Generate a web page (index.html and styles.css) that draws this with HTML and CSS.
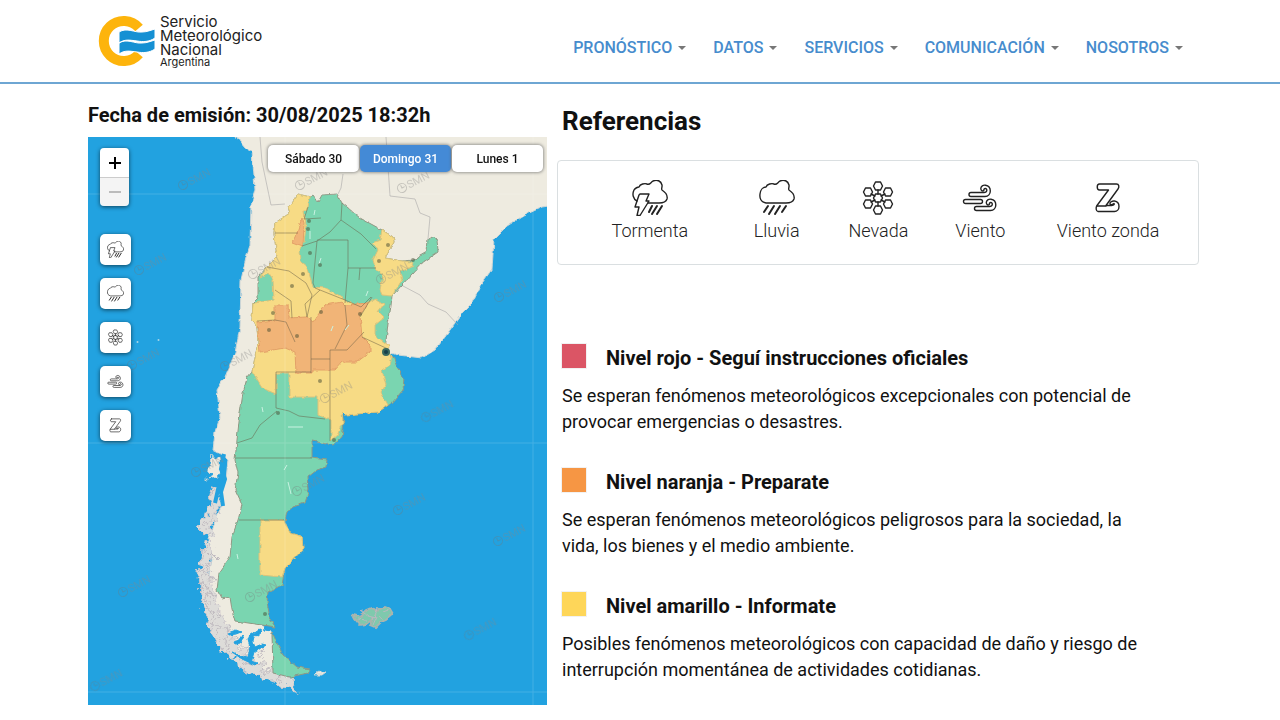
FILE: index.html
```html
<!DOCTYPE html>
<html lang="es">
<head>
<meta charset="utf-8">
<meta name="viewport" content="width=device-width, initial-scale=1">
<title>Alertas - Servicio Meteorológico Nacional</title>
<link rel="stylesheet" href="styles.css">
</head>
<body>
<svg class="sprite" aria-hidden="true">
  <symbol id="tormenta" viewBox="0 0 36 36">
    <path d="M5 21C1 19 0 14 2 10 3 8 6 7 7 7 8 4 13 3 15 4 18 5 18 3 21 1c4-2 8 0 9 4 .4 2-1 4 0 5 3 2 6 5 5 9-1 3-4 4-8 4H16"/>
    <path d="M8 14h9l-3 7h3L8 35.500H5L7 27H3l4-12z"/>
    <path class="thick" d="M20 26l-3 6M25 26l-5 8M30 26l-5 8"/>
  </symbol>
  <symbol id="lluvia" viewBox="0 0 36 36">
    <path d="M7 23C2 22 .5 18 1 14 1.500 10 4 7 7 7 8 4 13 3 15 4 18 5 18 3 21 1c4-2 8 0 9 4 .4 2-1 4 0 5 3 2 6 5 5 9-1 3-4 4-8 4z"/>
    <path class="thick" d="M9 26l-4 6M15 26l-5 8M21 26l-5 8M27 26l-4 6"/>
  </symbol>
  <symbol id="nevada" viewBox="0 0 36 36">
    <path d="M18 10v4M18 22v4M11 14l4 2M21 20l4 2M25 14l-4 2M15 20l-4 2"/>
    <path d="M15.500 2h5l2 4-2 4h-5l-2-4zM15.500 14h5l2 4-2 4h-5l-2-4zM15.500 26h5l2 4-2 4h-5l-2-4zM5.500 8h5l2 4-2 4h-5l-2-4zM25.500 8h5l2 4-2 4h-5l-2-4zM5.500 20h5l2 4-2 4h-5l-2-4zM25.500 20h5l2 4-2 4h-5l-2-4z"/>
  </symbol>
  <symbol id="viento" viewBox="0 0 36 36">
    <path d="M9 16.500a2 2 0 0 1 0-4h13c3.500 0 3.500-4 1.300-4-1.500 0-1.500 1-1.500 2-1.500 1-3 0-3-2 0-5 9.500-4.500 9.500 2.500 0 3-2 5.500-5.300 5.500z"/>
    <path d="M3.500 23.500a2 2 0 0 1 0-4h15a2 2 0 0 1 0 4z"/>
    <path d="M14.500 30.500a2 2 0 0 1 0-4h13c3.500 0 3.500-4 1.300-4-1.500 0-1.500 1-1.500 2-1.500 1-3 0-3-2 0-5 9.500-4.500 9.500 2.500 0 3-2 5.500-5.300 5.500z"/>
  </symbol>
  <symbol id="zonda" viewBox="0 0 36 36">
    <path d="M9.500 4h17c2.500 0 3 3 1.500 5L16 25.500h5.500c3 0 3-1.500 2.500-2-1 1-4 2-4 0 0-3.500 9-4 9 3 0 3-2 5-4.500 5H8c-2 0-2.500-4-1-6L18.500 10h-9c-3 0-3-6 0-6z"/>
    <path d="M7 26h9"/>
  </symbol>
  <symbol id="marca" viewBox="-6 -20 44 28">
    <g transform="rotate(-28)"><circle r="4.500"/><path d="M0-3V0H3"/><text x="6" y="4">SMN</text></g>
  </symbol>
</svg>

<header class="site-header">
  <a class="brand" href="#">
    <svg class="brand-mark" viewBox="0 0 58 54" aria-hidden="true">
      <path class="sun" d="M41 14A20 20 0 1 0 41 40" />
      <path class="wave" d="M21 18c8-5 16 1 23 0 5 0 9-2 13-3v9c-6 4-12 4-18 3-8-1-12-2-18 2zM21 29c8-5 16 1 23 0 5 0 9-2 13-3v9c-6 4-12 4-18 3-8-1-12-2-18 2z"/>
    </svg>
    <span class="brand-text"><span>Servicio</span><span>Meteorológico</span><span>Nacional</span><small>Argentina</small></span>
  </a>
  <nav class="menu" aria-label="Principal">
    <a href="#">PRONÓSTICO</a><a href="#">DATOS</a><a href="#">SERVICIOS</a><a href="#">COMUNICACIÓN</a><a href="#">NOSOTROS</a>
  </nav>
</header>

<main class="content">
  <section class="alerts">
    <h2 class="issued">Fecha de emisión: 30/08/2025 18:32h</h2>
    <div class="map">
      <svg class="map-art" viewBox="88 137 459 568" role="img" aria-label="Mapa de alertas de Argentina">
        <defs>
          <filter id="costa" x="-5%" y="-5%" width="110%" height="110%"><feTurbulence type="fractalNoise" baseFrequency=".16" numOctaves="2" seed="4"/><feDisplacementMap in="SourceGraphic" scale="4" xChannelSelector="R" yChannelSelector="G"/></filter>
          <filter id="islas" x="-10%" y="-10%" width="120%" height="120%"><feTurbulence type="fractalNoise" baseFrequency=".13" numOctaves="3" seed="8"/><feDisplacementMap in="SourceGraphic" scale="16" xChannelSelector="R" yChannelSelector="G"/></filter>
        </defs>
        <path class="sea" d="M88 137h459v568H88z"/>
        <g filter="url(#costa)">
          <path class="land" d="M232 130L240 142 245 148 252 152 254 175 255 190 251 205 250 245 246 258 241 280 240 327 235 353 225 377 217 390 220 417 215 433 213 450 223 455 228 460 226 480 219 495 222 505 213 525 208 540 212 560 207 585 213 610 221 630 235 650 260 676 280 683 295 679 273 672 272 632 260 625 250 560 270 460 300 400 380 350 398 355 422 358 435 350 445 337 462 313 472 303 480 286 492 269 494 239 507 226 523 216 542 207 555 205V130z"/>
        </g>
        <g filter="url(#islas)">
          <path class="land" d="M211 456h8l1 22-11 2z"/>
          <path class="isles" d="M212 486l8 3-1 18-6 15-2 14-10-4-4-4 9-12zM204 540l9 2-3 22 4 28 7 22 9 18 15 21 20 15 17 6 10 8 6 10-8-3-22-9-25-11-20-17-12-19-9-26-3-35z"/>
          <path class="scratches" d="M214 488l-5 14 5 12-8 12 6 7M208 543l-6 18 7 9-9 12 8 8-4 14 9 8-4 11 11 6-5 8 14 7-4 7 15 7 6-4 3 11 13-3 1 10 10-5 3 12 10-4M205 550l9 9-13 11 12 5-12 14 14 8-10 11 16 5-10 13 18 2-5 12 16-2 4 13 16-3 4 12"/>
        </g>
        <circle class="islet" cx="158.500" cy="340" r="1"/><circle class="islet" cx="137.500" cy="342" r="1"/>
        <path class="channels" d="M224 454l-3 15 4 10-4 13 2 14M219 485l-4 18"/>
        <g filter="url(#costa)">
          <path class="straits" d="M228 633l8-3 5 2-5 2-7 1zM234 642l5-2 3-5 2 3-4 5-5 1zM247 661l3-14-2-7 3-8 4 1-2 9 2 5 7-3 4 1-7 5-4 2-3 11zM253 634l6-4 3 1-6 5zM263 627l8-2 1 6-8-1zM232 652l14 6 11 5-2 2-13-6z"/>
        </g>
        <path class="countries" d="M260 137l2 25 9 43 14-1M343 174l-2 14-3 6M386 137l4 59 25 3 5 14 10 4-2 22M403 286l17 9 8 9 18 8 12 13"/>
        <g filter="url(#costa)">
          <path class="green edge" d="M298 194L310 197 313 195 318 202 322 195 337 194 342 203 360 218 382 230 393 237 394 242 385 258 402 261 413 260 427 252 428 240 432 237 437 239 438 252 422 263 402 285 392 296 390 313 388 323 385 350 393 357 397 367 404 378 403 390 392 403 378 412 345 415 342 412 344 423 342 437 332 445 312 441 312 458 327 460 326 467 317 470 308 477 309 490 305 503 293 507 287 512 284 525 290 533 303 537 304 548 285 568 282 585 268 592 267 602 270 618 275 627 235 621 232 610 230 597 222 599 217 590 219 573 230 557 232 537 238 520 242 505 235 490 238 473 235 460 237 440 240 413 243 393 247 378 252 372 258 343 257 327 252 320 253 303 258 298 258 277 267 267 277 257 274 233 275 223 290 213 288 207z"/>
          <path class="green edge" d="M272 632L277 643 283 655 297 667 310 669 308 673 290 677 273 673z"/>
          <path class="yellow" d="M298 194L310 197 308 207 304 212 306 225 304 243 300 250 301 262 308 268 313 287 325 288 345 300 358 305 368 303 376 299 384 304 378 312 384 318 375 325 375 335 388 345 392 357 390 365 382 370 386 385 381 392 388 405 378 412 345 415 342 412 343 423 338 435 331 441V421L318 414V397H289V373H276V394L262 388 252 372 258 343 257 327 252 320 253 303 274 300 273 280 268 273 260 277 267 267 277 257 274 233 275 223 290 213 288 207z"/>
          <path class="yellow" d="M382 230L393 237 394 242 385 258 402 261 412 262 414 266 400 272 402 280 392 296 382 295 380 290 383 275 376 270 373 260 378 250 372 243 380 240z"/>
          <path class="yellow" d="M260 520H284L290 533 303 537 304 548 285 568 282 577 260 575z"/>
          <path class="orange" d="M275 305H288L289 318 307 317 313 322 325 305 342 302 345 305 368 303 360 315 362 337 370 345V352L357 362H342L335 370H312V373H296L295 352 285 348 260 352 257 322 275 320zM302 217L304 223 303 247 292 243 297 233z"/>
        </g>
        <path class="borders" d="M275 233h23M308 207l-4 12 17-1M342 203l-1 17-11 12-13 9-15 5M317 241l-4 42 2 5 30 12M317 240h31v28M341 220l20 14 15 15M348 268h28M348 268l-3 35M267 267l22 4 17 12 6 12-5 22M275 290l16 11 1 17M307 317l-2-13 15-14M311 317v56M276 372h35M330 350v91M330 350h17l17-18M345 305l2 20-12 24M311 359h19M276 372v36l13 3 10 5 26 3M237 443l15-5 8-13 17-14M235 458h77M239 520h45M257 321l18-1 11 2 9 20M345 300l16 7 10-10M372 297l-12 20M362 337l26 12M360 268l-1 12"/>
        <path class="marks" d="M262 407l1 5M288 427h15M288 482l3 12M284 470l3-5M315 210l-1 5M321 258l-2 6M368 291l-2 5M333 326l-2 5M345 330l4-5M310 231v8M237 554l1 5"/>
        <g class="cities"><circle cx="309" cy="221" r="2"/><circle cx="308" cy="229" r="2"/><circle cx="310" cy="253" r="2"/><circle cx="320" cy="265" r="2"/><circle cx="292" cy="286" r="2"/><circle cx="303" cy="274" r="2"/><circle cx="379" cy="261" r="2"/><circle cx="388" cy="245" r="2"/><circle cx="273" cy="313" r="2"/><circle cx="269" cy="330" r="2"/><circle cx="297" cy="336" r="2"/><circle cx="321" cy="312" r="2"/><circle cx="360" cy="314" r="2"/><circle cx="320" cy="381" r="2"/><circle cx="278" cy="413" r="2"/><circle cx="413" cy="260" r="2"/><circle cx="265" cy="614" r="2"/><circle cx="334" cy="440" r="2"/></g>
        <circle class="capital" cx="386" cy="352" r="3"/>
        <g filter="url(#costa)">
          <path class="falklands" d="M353 615l8 2 3-6 7-3 6 2 8-3 5 2 3 5-7 6-5 2-6 6-5-2 3-7-7 5-6 1-5-6z"/>
          <path class="falklands-cuts" d="M360 610l8 6 8 2-3 7M378 608l-5 12M383 612l8-3M357 619l10 1M384 620l-6-4"/>
          <path class="land" d="M314 675l5-3 7 0-4 3z"/>
        </g>
        <path class="grid-lines" d="M88 194h459M88 443h459M88 692h459M285 137v568M533 137v568"/>
        <g class="watermarks">
          <use href="#marca" x="177" y="165" width="44" height="28"/><use href="#marca" x="294" y="165" width="44" height="28"/><use href="#marca" x="396" y="168" width="44" height="28"/><use href="#marca" x="133" y="250" width="44" height="28"/><use href="#marca" x="247" y="254" width="44" height="28"/><use href="#marca" x="375" y="259" width="44" height="28"/><use href="#marca" x="493" y="277" width="44" height="28"/><use href="#marca" x="126" y="345" width="44" height="28"/><use href="#marca" x="219" y="346" width="44" height="28"/><use href="#marca" x="319" y="378" width="44" height="28"/><use href="#marca" x="420" y="397" width="44" height="28"/><use href="#marca" x="190" y="452" width="44" height="28"/><use href="#marca" x="291" y="471" width="44" height="28"/><use href="#marca" x="392" y="490" width="44" height="28"/><use href="#marca" x="492" y="521" width="44" height="28"/><use href="#marca" x="117" y="572" width="44" height="28"/><use href="#marca" x="244" y="577" width="44" height="28"/><use href="#marca" x="463" y="615" width="44" height="28"/><use href="#marca" x="89" y="666" width="44" height="28"/>
        </g>
      </svg>
      <div class="map-tools">
        <div class="zoom"><button type="button" aria-label="Acercar"><svg viewBox="0 0 12 12"><path d="M0 6h12M6 0v12"/></svg></button><button type="button" aria-label="Alejar" disabled><svg viewBox="0 0 12 12"><path d="M0 6h12"/></svg></button></div>
        <button type="button" class="tool" aria-label="Tormenta"><svg class="icon"><use href="#tormenta"/></svg></button>
        <button type="button" class="tool" aria-label="Lluvia"><svg class="icon"><use href="#lluvia"/></svg></button>
        <button type="button" class="tool" aria-label="Nevada"><svg class="icon"><use href="#nevada"/></svg></button>
        <button type="button" class="tool" aria-label="Viento"><svg class="icon"><use href="#viento"/></svg></button>
        <button type="button" class="tool" aria-label="Viento zonda"><svg class="icon"><use href="#zonda"/></svg></button>
      </div>
      <div class="days"><button type="button">Sábado 30</button><button type="button" class="active" aria-pressed="true">Domingo 31</button><button type="button">Lunes 1</button></div>
    </div>
  </section>

  <section class="references">
    <h1>Referencias</h1>
    <ul class="phenomena">
      <li><svg class="icon"><use href="#tormenta"/></svg>Tormenta</li>
      <li><svg class="icon"><use href="#lluvia"/></svg>Lluvia</li>
      <li><svg class="icon"><use href="#nevada"/></svg>Nevada</li>
      <li><svg class="icon"><use href="#viento"/></svg>Viento</li>
      <li><svg class="icon"><use href="#zonda"/></svg>Viento zonda</li>
    </ul>
    <div class="levels">
      <article class="level red"><h3>Nivel rojo - Seguí instrucciones oficiales</h3><p>Se esperan fenómenos meteorológicos excepcionales con potencial de provocar emergencias o desastres.</p></article>
      <article class="level amber"><h3>Nivel naranja - Preparate</h3><p>Se esperan fenómenos meteorológicos peligrosos para la sociedad, la vida, los bienes y el medio ambiente.</p></article>
      <article class="level gold"><h3>Nivel amarillo - Informate</h3><p>Posibles fenómenos meteorológicos con capacidad de daño y riesgo de interrupción momentánea de actividades cotidianas.</p></article>
    </div>
  </section>
</main>
</body>
</html>
```
FILE: styles.css
```css
* { box-sizing: border-box; }
body { margin: 0; background: #fff; color: #111; font-family: Roboto, sans-serif; }
h1, h2, h3, p, ul { margin: 0; padding: 0; }
button { font: inherit; border: 0; padding: 0; cursor: pointer; }
.sprite { display: none; }

.site-header { display: flex; justify-content: space-between; align-items: flex-end; padding: 14px 97px 14px 98px; border-bottom: 2px solid #6ea6d3; }
.brand { display: flex; gap: 4px; color: #222; text-decoration: none; }
.brand-mark { width: 58px; height: 54px; }
.sun { fill: none; stroke: #fdb40c; stroke-width: 10; }
.wave { fill: #1590d3; stroke: #fff; stroke-width: 1; }
.brand-text { display: flex; flex-direction: column; padding-top: 1px; font: 400 15px/14px Inter, sans-serif; }
.brand-text small { font-size: 11px; line-height: 11px; }
.menu { display: flex; gap: 27px; padding-bottom: 10px; }
.menu a { display: flex; align-items: center; gap: 6px; color: #478ccd; font-size: 16px; font-weight: 500; line-height: 20px; text-decoration: none; }
.menu a::after { content: ""; border: 4px solid transparent; border-top-color: #777; border-bottom: 0; }

.content { display: grid; grid-template-columns: 459fr 642fr; gap: 10px; padding: 19px 81px 15px 88px; align-items: start; }
.issued { font-size: 20px; font-weight: 700; line-height: 24px; margin-bottom: 10px; }
.map { position: relative; }
.map-art { display: block; width: 100%; height: auto; }
.sea { fill: #22a2e0; }
.land { fill: #eeebe0; stroke: #ccd5d6; stroke-width: 1; }
.islet { fill: #a9d6e6; }
.isles { fill: #dddcd9; stroke: #cbc6cb; stroke-width: 1; }
.scratches { fill: none; stroke: #c0bbc0; stroke-width: 1; }
.channels { fill: none; stroke: #22a2e0; stroke-width: 4; }
.straits { fill: #22a2e0; stroke: #22a2e0; stroke-width: 1; }
.countries { fill: none; stroke: #aaa9a8; stroke-width: 1; opacity: .6; }
.green { fill: #7ad5b0; }
.edge { stroke: #909884; stroke-width: 1; }
.yellow { fill: #f7db85; stroke: #d9c37c; stroke-width: 1; }
.orange { fill: #f1b477; stroke: #e3a168; stroke-width: 1; }
.borders { fill: none; stroke: #675e45; stroke-width: 1; opacity: .5; }
.marks { fill: none; stroke: #c9f2e2; stroke-width: 1; }
.cities { fill: #454b31; opacity: .5; }
.capital { fill: #173f49; stroke: #39695f; stroke-width: 2; }
.falklands { fill: #7fc9ad; stroke: #a9b5ae; stroke-width: 2; }
.falklands-cuts { fill: none; stroke: #b9b9c0; stroke-width: 1; }
.grid-lines { stroke: #fff; stroke-width: 1; opacity: .15; }
.watermarks { fill: none; stroke: #777; stroke-width: 1; opacity: .35; }
.watermarks use { font: 11px Roboto, sans-serif; }
#marca text { fill: #888; stroke: none; }

.map-tools { position: absolute; left: 12px; top: 11px; display: flex; flex-direction: column; gap: 13px; }
.zoom { width: 29px; margin-bottom: 15px; border-radius: 4px; overflow: hidden; box-shadow: 0 1px 4px #0009; }
.zoom button { display: grid; place-items: center; width: 29px; height: 29px; background: #fff; }
.zoom button:disabled { background: #f4f4f4; border-top: 1px solid #ccc; }
.zoom svg { width: 12px; height: 12px; stroke: #000; stroke-width: 2; }
.zoom button:disabled svg { stroke: #bbb; }
.tool { display: grid; place-items: center; width: 31px; height: 31px; background: #fff; border-radius: 5px; box-shadow: 0 1px 4px #0009; }
.icon { display: block; fill: none; stroke: #222; stroke-width: 1.4; stroke-linejoin: round; stroke-linecap: round; }
.thick { stroke-width: 2; }
.tool .icon { width: 17px; height: 17px; }
.days { position: absolute; right: 4px; top: 8px; display: flex; gap: 1px; }
.days button { width: 91px; height: 27px; background: #fff; border-radius: 5px; color: #111; font-size: 12px; font-weight: 500; box-shadow: 0 0 3px 1px #6669; }
.days .active { background: #448ad6; color: #fff; }

.references h1 { padding: 0 5px; margin: 2px 0 23px; font-size: 26px; line-height: 32px; font-weight: 700; }
.phenomena { display: grid; grid-template-columns: 130fr 124fr 80fr 124fr 132fr; padding: 19px 24px 21px 27px; border: 1px solid #dadfe1; border-radius: 4px; list-style: none; }
.phenomena li { display: flex; flex-direction: column; align-items: center; gap: 3px; font-size: 18px; line-height: 24px; font-weight: 300; color: #222; white-space: nowrap; }
.phenomena .icon { width: 36px; height: 36px; }
.levels { display: grid; gap: 32px; padding: 78px 45px 0 5px; }
.level h3 { display: flex; align-items: flex-start; gap: 20px; font-size: 20px; line-height: 30px; font-weight: 700; }
.level h3::before { content: ""; width: 24px; height: 24px; margin-top: 1px; background: var(--tone); outline: 1px solid #ddd6; }
.level p { margin-top: 10px; font-size: 18px; line-height: 26px; }
.red { --tone: #db5565; }
.amber { --tone: #f69644; }
.gold { --tone: #fed659; }
```
